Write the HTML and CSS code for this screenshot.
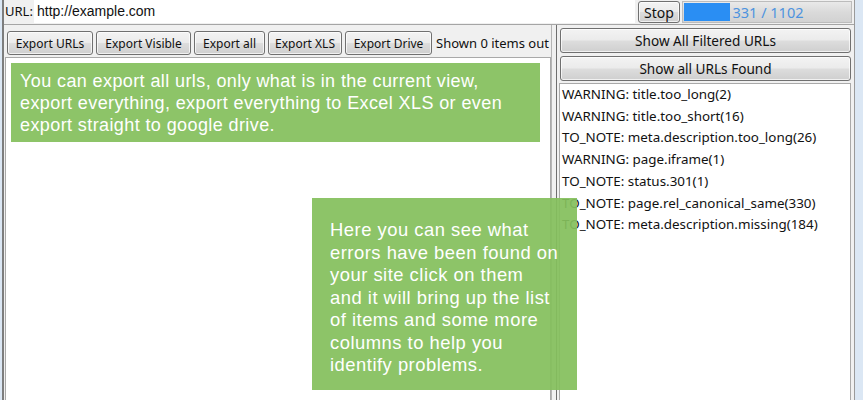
FILE: index.html
```html
<!DOCTYPE html>
<html>
<head>
<meta charset="utf-8">
<link rel="stylesheet" href="styles.css">
</head>
<body>
<div class="app">
  <div class="topbar">
    <span class="url-label">URL:</span>
    <div class="url-input">http://example.com</div>
    <button class="btn stop">Stop</button>
    <div class="progress">
      <div class="progress-fill"></div>
      <span class="progress-text">331 / 1102</span>
    </div>
  </div>
  <div class="workspace">
    <div class="left-panel">
      <div class="toolbar">
        <button class="btn w85">Export URLs</button>
        <button class="btn w94">Export Visible</button>
        <button class="btn w70">Export all</button>
        <button class="btn w73">Export XLS</button>
        <button class="btn w86">Export Drive</button>
        <span class="shown">Shown 0 items out</span>
      </div>
      <div class="results"></div>
    </div>
    <div class="splitter"></div>
    <div class="right-panel">
      <button class="btn wide">Show All Filtered URLs</button>
      <button class="btn wide">Show all URLs Found</button>
      <ul class="issues">
        <li>WARNING: title.too_long(2)</li>
        <li>WARNING: title.too_short(16)</li>
        <li>TO_NOTE: meta.description.too_long(26)</li>
        <li>WARNING: page.iframe(1)</li>
        <li>TO_NOTE: status.301(1)</li>
        <li>TO_NOTE: page.rel_canonical_same(330)</li>
        <li>TO_NOTE: meta.description.missing(184)</li>
      </ul>
    </div>
  </div>
</div>
<div class="callout callout-export">You can export all urls, only what is in the current view, export everything, export everything to Excel XLS or even export straight to google drive.</div>
<div class="callout callout-errors">Here you can see what<br>errors have been found on<br>your site click on them<br>and it will bring up the list<br>of items and some more<br>columns to help you<br>identify problems.</div>
</body>
</html>
```
FILE: styles.css
```css
html, body {
  margin: 0;
  padding: 0;
}
body {
  width: 863px;
  height: 400px;
  overflow: hidden;
  background: #dbe7f4;
  font-family: "Noto Sans", "DejaVu Sans", sans-serif;
  font-size: 12px;
  color: #111;
  position: relative;
}
.app {
  margin-left: 2px;
  width: 850px;
  height: 400px;
  border-left: 2px solid #7d7d7d;
  border-right: 1px solid #9a9a9a;
  background: #f0f0f0;
  display: flex;
  flex-direction: column;
}
.topbar {
  display: flex;
  align-items: flex-start;
  border-bottom: 1px solid #a5a5a5;
  box-sizing: border-box;
  height: 25px;
}
.url-label {
  width: 29px;
  padding-left: 1px;
  line-height: 23px;
  font-size: 13px;
}
.url-input {
  flex: 1;
  height: 23px;
  background: #fff;
  font-family: "Liberation Sans", Arial, sans-serif;
  font-size: 14px;
  line-height: 23px;
  padding-left: 3px;
}
.btn {
  font-family: "Noto Sans", "DejaVu Sans", sans-serif;
  font-size: 12px;
  color: #111;
  height: 24px;
  padding: 0;
  border: 1px solid #707070;
  border-radius: 3px;
  background: linear-gradient(#f3f3f3 0%, #ebebeb 48%, #dddddd 52%, #cfcfcf 100%);
  box-shadow: inset 0 0 0 1px rgba(255,255,255,0.7);
  box-sizing: border-box;
  white-space: nowrap;
  flex-shrink: 0;
}
.stop {
  width: 42px;
  height: 22px;
  margin: 1px 0 0 3px;
  font-size: 14px;
}
.progress {
  position: relative;
  width: 170px;
  height: 22px;
  margin: 1px 2px 0 2px;
  border: 1px solid #bcbcbc;
  box-sizing: border-box;
  background: linear-gradient(#e9e9e9, #dadada 50%, #d2d2d2);
  display: flex;
  align-items: center;
  justify-content: center;
}
.progress-fill {
  position: absolute;
  left: 1px;
  top: 1px;
  bottom: 1px;
  width: 46px;
  background: #2a8ef3;
}
.progress-text {
  position: relative;
  color: #4d93df;
  font-size: 14.5px;
  padding-left: 2px;
}
.workspace {
  flex: 1;
  display: flex;
  min-height: 0;
}
.left-panel {
  width: 547px;
  display: flex;
  flex-direction: column;
  border-right: 1px solid #b5b5b5;
}
.toolbar {
  display: flex;
  align-items: center;
  gap: 3px;
  padding: 4px 0 0 3px;
  height: 32px;
  box-sizing: border-box;
  white-space: nowrap;
}
.w85 { width: 86px; }
.w94 { width: 95px; }
.w70 { width: 71px; }
.w73 { width: 74px; }
.w86 { width: 87px; }
.shown {
  padding-left: 1px;
  font-size: 13px;
  flex-shrink: 0;
}
.results {
  flex: 1;
  margin: 0 0 0 1px;
  background: #fff;
  border: 1px solid #a9a9a9;
  border-bottom: none;
}
.splitter {
  width: 4px;
  border-right: 1px solid #6e6e6e;
}
.right-panel {
  flex: 1;
  display: flex;
  flex-direction: column;
  gap: 3px;
  padding: 3px 1px 0 3px;
}
.wide {
  width: 291px;
  height: 25px;
  font-size: 13.6px;
}
.issues {
  flex: 1;
  list-style: none;
  margin: -1px 0 0 -1px;
  padding: 0 0 0 2px;
  background: #fff;
  border: 1px solid #a9a9a9;
  border-bottom: none;
  width: 292px;
  box-sizing: border-box;
}
.issues li {
  line-height: 21.7px;
  font-size: 13.4px;
  white-space: nowrap;
}
.callout {
  position: absolute;
  background: rgba(132, 192, 93, 0.93);
  color: #fff;
  font-family: "Liberation Sans", Arial, sans-serif;
  font-size: 18px;
  letter-spacing: 0.4px;
  line-height: 22px;
  box-sizing: border-box;
}
.callout-export {
  left: 11px;
  top: 63px;
  width: 529px;
  height: 79px;
  padding: 7px 20px 0 9px;
}
.callout-errors {
  left: 312px;
  top: 198px;
  width: 265px;
  height: 192px;
  padding: 21px 0 0 18px;
  font-size: 18.4px;
  letter-spacing: 0.5px;
  line-height: 22.5px;
  white-space: nowrap;
}
```
